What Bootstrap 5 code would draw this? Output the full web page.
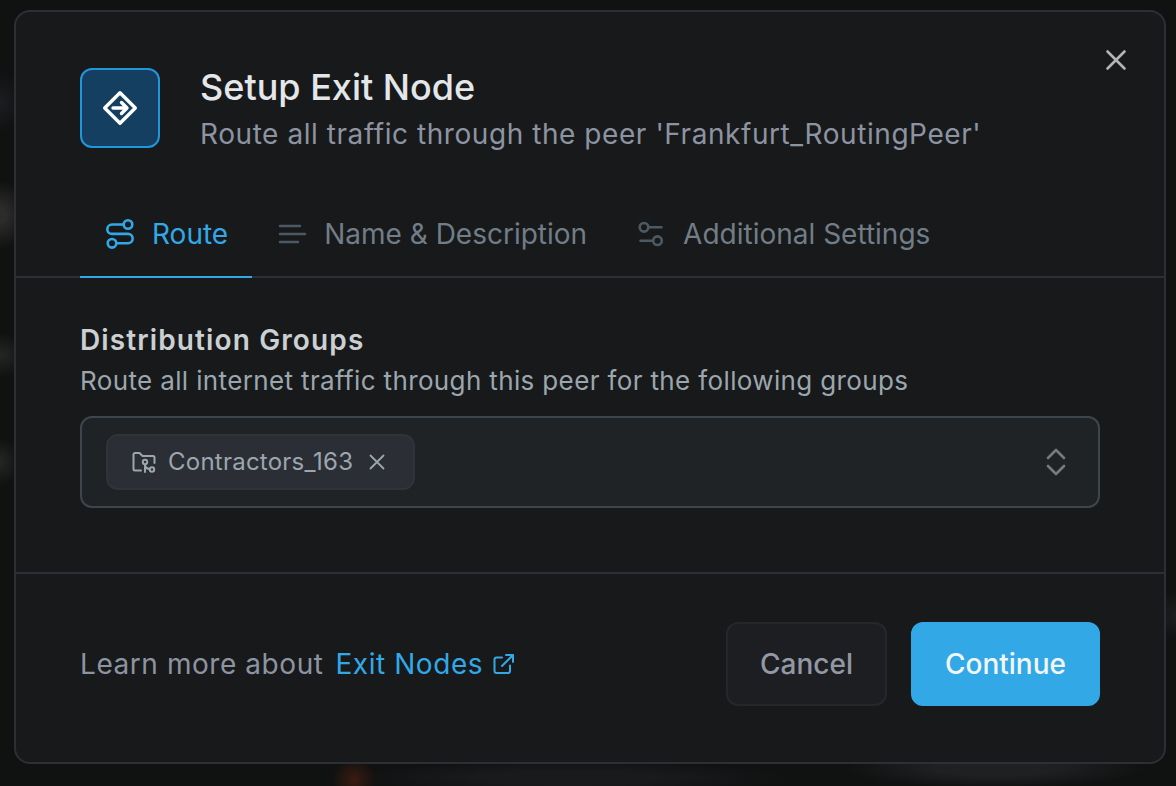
<!DOCTYPE html>
<html lang="en" data-bs-theme="dark">
<head>
<meta charset="utf-8">
<meta name="viewport" content="width=device-width, initial-scale=1">
<title>Setup Exit Node</title>
<link href="https://cdn.jsdelivr.net/npm/bootstrap@5.3.0/dist/css/bootstrap.min.css" rel="stylesheet">
<style>
  :root { --accent: #32a8e6; --line: #2d2f37; --muted: #8d94a1; }
  body {
    font-family: Inter, "Liberation Sans", sans-serif;
    font-size: 28px;
    line-height: 40px;
    color: var(--muted);
    min-height: 100vh;
    padding: 10px 10px 22px 14px;
    background:
      radial-gradient(22px 22px at 354px 780px, #3a1c10, transparent),
      radial-gradient(220px 18px at 570px 778px, #191a1c 40%, transparent),
      radial-gradient(150px 20px at 995px 768px, #1f2022 40%, transparent),
      radial-gradient(28px 34px at 0 215px, #2c2c2b 20%, transparent),
      radial-gradient(30px 22px at 0 355px, #242524, transparent),
      radial-gradient(20px 24px at 0 462px, #252625, transparent),
      radial-gradient(24px 30px at 0 102px, #1c1d20, transparent),
      radial-gradient(24px 24px at 1176px 616px, #1d1e1f, transparent),
      #101111;
  }
  svg { fill: none; stroke: currentColor; stroke-linecap: round; stroke-linejoin: round; flex: none; }
  .tracked { letter-spacing: .02em; }
  .dialog-card { --bs-card-bg: #18191b; background: #18191b; border: 2px solid var(--line); border-radius: 16px; color: inherit; }
  .dialog-head { padding: 56px 64px 38px; gap: 40px; }
  .dialog-icon { width: 80px; height: 80px; border: 2px solid #1f96dd; border-radius: 12px; background: #153f60; color: #fff; }
  .dialog-title { font-size: 36px; line-height: 38px; font-weight: 550; margin-bottom: 8px; color: #e4e7e9; }
  .plain-btn { background: none; border: 0; padding: 0; display: flex; align-items: center; justify-content: center; color: inherit; }
  .close-btn { position: absolute; top: 28px; right: 28px; width: 40px; height: 40px; color: #b3b4b5; }
  .dialog-tabs { padding: 0 64px; border-bottom: 2px solid var(--line); }
  .dialog-tabs .nav-link {
    display: flex; align-items: center; gap: 16px; padding: 22px 24px;
    margin-bottom: -2px; border: 0; border-bottom: 2px solid transparent; border-radius: 0;
    background: none; color: #717d87;
  }
  .dialog-tabs .nav-link svg { color: #4c5a64; }
  .dialog-tabs .nav-link.active, .dialog-tabs .nav-link.active svg { color: var(--accent); }
  .dialog-tabs .nav-link.active { border-color: var(--accent); background: none; }
  .dialog-main { padding: 42px 64px 64px; }
  .field-label { font-weight: 600; color: #cbd0d3; display: block; letter-spacing: .04em; }
  .field-help { font-size: 26px; line-height: 42px; color: #9ca6ae; margin-bottom: 14px; letter-spacing: .014em; }
  .group-select { border: 2px solid #3e464d; border-radius: 12px; background: #1f2325; padding: 16px 24px; }
  .group-chip {
    height: 56px; padding: 0 24px; gap: 12px; border: 2px solid #313338; border-radius: 12px;
    background: #2c2e36; color: #9ca6ae; font-size: 24px; letter-spacing: .01em;
  }
  .group-select input { background: none; border: 0; outline: 0; color: inherit; min-width: 0; }
  .expand-btn { color: #77797a; }
  .dialog-foot { padding: 48px 64px 56px; border-top: 2px solid var(--line); }
  .learn-more { gap: 12px; }
  .learn-link { color: var(--accent); gap: 8px; }
  .action-btn { height: 84px; padding: 0 32px; font-size: 28px; font-weight: 500; border-width: 2px; border-radius: 12px; }
  .btn-quiet { background: #1d1e22; border-color: #23282c; color: #9299a5; }
  .btn-accent { background: var(--accent); border-color: var(--accent); color: #f3f7fb; }
</style>
</head>
<body>
<main class="card dialog-card" role="dialog" aria-labelledby="dialog-title">
  <button type="button" class="plain-btn close-btn" aria-label="Close">
    <svg width="32" height="32" viewBox="0 0 32 32" stroke-width="2.6"><path d="M7.500 7.500l17 17M24.500 7.500l-17 17"/></svg>
  </button>

  <header class="dialog-head d-flex align-items-start">
    <div class="dialog-icon d-flex align-items-center justify-content-center flex-shrink-0">
      <svg width="36" height="36" viewBox="0 0 36 36" stroke-width="3.400"><path d="M18 2.700 33.300 18 18 33.300 2.700 18Z"/><path d="M11 18h13M19.500 12.500 25 18l-5.500 5.500"/></svg>
    </div>
    <div>
      <h1 id="dialog-title" class="dialog-title">Setup Exit Node</h1>
      <p class="tracked mb-0">Route all traffic through the peer 'Frankfurt_RoutingPeer'</p>
    </div>
  </header>

  <div class="dialog-tabs nav" role="tablist">
    <button type="button" class="nav-link active" role="tab" aria-selected="true">
      <svg width="32" height="32" viewBox="0 0 32 32" stroke-width="2.600"><circle cx="24" cy="6.500" r="4.300"/><circle cx="8" cy="25.300" r="4.300"/><path d="M19.500 6.500H8a4.700 4.700 0 0 0 0 9.400h16a4.700 4.700 0 0 1 0 9.400H12.500"/></svg>
      Route
    </button>
    <button type="button" class="nav-link" role="tab" aria-selected="false">
      <svg width="32" height="32" viewBox="0 0 32 32" stroke-width="2.400"><path d="M4 8h20M4 16h25M4 24h18"/></svg>
      Name &amp; Description
    </button>
    <button type="button" class="nav-link" role="tab" aria-selected="false">
      <svg width="32" height="32" viewBox="0 0 32 32" stroke-width="2.600"><circle cx="9" cy="9.300" r="4.300"/><path d="M13.500 9.300h13M5.500 22.700h12.500"/><circle cx="22.500" cy="22.700" r="4.300"/></svg>
      Additional Settings
    </button>
  </div>

  <section class="dialog-main">
    <label class="field-label" for="groups">Distribution Groups</label>
    <p class="field-help" id="groups-help">Route all internet traffic through this peer for the following groups</p>
    <div class="group-select d-flex align-items-center">
      <span class="group-chip d-flex align-items-center">
        <svg width="24" height="24" viewBox="0 0 24 24" stroke-width="2"><path d="M9 20.500H3a1.500 1.500 0 0 1-1.500-1.500V4.500A1.500 1.500 0 0 1 3 3h4.500l3 3H21a1.500 1.500 0 0 1 1.500 1.500V13"/><circle cx="13" cy="12" r="2.200"/><path d="M13 14.500V22M13 15.500q1 3.500 4.500 3.500"/><circle cx="20" cy="19.500" r="2.200"/></svg>
        Contractors_163
        <button type="button" class="plain-btn" aria-label="Remove Contractors_163">
          <svg width="24" height="24" viewBox="0 0 24 24" stroke-width="1.800"><path d="M5.500 5.500l13 13M18.500 5.500l-13 13"/></svg>
        </button>
      </span>
      <input id="groups" class="flex-grow-1" type="text" role="combobox" aria-expanded="false" aria-describedby="groups-help">
      <button type="button" class="plain-btn expand-btn" aria-label="Show groups">
        <svg width="36" height="36" viewBox="0 0 36 36" stroke-width="2.600"><path d="M10 14 18 6l8 8M10 22l8 8 8-8"/></svg>
      </button>
    </div>
  </section>

  <footer class="dialog-foot d-flex align-items-center justify-content-between">
    <p class="tracked learn-more d-flex align-items-center mb-0">Learn more about
      <a href="#" class="learn-link d-flex align-items-center text-decoration-none">Exit Nodes
        <svg width="24" height="24" viewBox="0 0 24 24" stroke-width="2"><path d="M11 5.500H5.500a2 2 0 0 0-2 2V19a2 2 0 0 0 2 2H17a2 2 0 0 0 2-2v-5.500M15 3h7v7M11 14 22 3"/></svg>
      </a>
    </p>
    <div class="d-flex gap-4">
      <button type="button" class="btn action-btn btn-quiet">Cancel</button>
      <button type="button" class="btn action-btn btn-accent">Continue</button>
    </div>
  </footer>
</main>
<script src="https://cdn.jsdelivr.net/npm/bootstrap@5.3.0/dist/js/bootstrap.bundle.min.js"></script>
</body>
</html>
